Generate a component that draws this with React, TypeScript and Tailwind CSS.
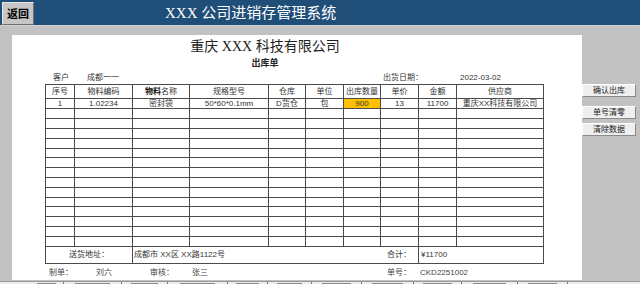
const cols = [29, 58, 57, 79, 37, 38, 37, 38, 38, 87];
const rowHeights = [10, 10, 10, 10, 10, 9, 10, 10, 10, 10, 9, 10, 10, 10, 10];

const firstRow = ["1", "1.02234", "密封袋", "50*60*0.1mm", "D货仓", "包", "900", "13", "11700", "重庆XX科技有限公司"];

const tabWidths = [34, 58, 46, 60, 40, 44, 50, 52, 48, 56, 50];

function SideButton({ label, className }: { label: string; className?: string }) {
  return (
    <button
      type="button"
      className={`w-[54px] h-[13px] bg-[#efefef] border-t border-l border-t-white border-l-white border-b border-r border-b-[#8a8a8a] border-r-[#8a8a8a] text-[8px] leading-[11px] text-[#222] ${className ?? ""}`}
    >
      {label}
    </button>
  );
}

export default function App() {
  return (
    <div className="w-[640px] h-[284px] overflow-hidden bg-[#c2c2c2] flex flex-col font-['Liberation_Sans','Noto_Sans_CJK_SC',sans-serif]">
      {/* top bar */}
      <header className="h-[26px] shrink-0 bg-[#1f4e79] flex items-start border-b border-[#d2d2d2]">
        <button
          type="button"
          className="mt-[2px] ml-[2px] w-[32px] h-[23px] bg-[#c6c6c6] border-t border-l border-t-[#e6e6e6] border-l-[#e6e6e6] border-b border-r border-b-[#6d6d6d] border-r-[#6d6d6d] text-[11px] font-bold text-black leading-[20px]"
        >
          返回
        </button>
        <h1 className="ml-[131px] mt-[3px] text-[15px] leading-[20px] text-white font-['Liberation_Serif','Noto_Sans_CJK_SC',serif]">
          XXX 公司进销存管理系统
        </h1>
      </header>

      <div className="flex flex-1 min-h-0">
        <div className="pl-[12px] pt-[9px]">
          <div className="w-[570px] h-[245px] bg-white flex flex-col text-[8px] text-[#333]">
            <div className="w-[506px] mt-[4px] text-center text-[14px] leading-[16px] text-[#222] font-['Liberation_Serif','Noto_Sans_CJK_SC',serif]">
              重庆 XXX 科技有限公司
            </div>
            <div className="w-[506px] mt-[3px] text-center text-[9px] leading-[11px] font-bold text-[#222]">
              出库单
            </div>

            <div className="flex mt-[3px] h-[12px] leading-[12px] pl-[41px]">
              <span className="w-[34px]">客户</span>
              <span className="w-[296px]">成都一一</span>
              <span className="w-[77px]">出货日期：</span>
              <span>2022-03-02</span>
            </div>

            <table className="ml-[33px] w-[498px] table-fixed border-collapse">
              <colgroup>
                {cols.map((w, i) => (
                  <col key={i} style={{ width: w }} />
                ))}
              </colgroup>
              <tbody>
                <tr className="h-[14px]">
                  {["序号", "物料编码", null, "规格型号", "仓库", "单位", "出库数量", "单价", "金额", "供应商"].map((h, i) => (
                    <td key={i} className="border border-[#4b4b4b] text-center p-0 leading-[12px]">
                      {h ?? (
                        <>
                          <b className="text-[#111]">物料</b>名称
                        </>
                      )}
                    </td>
                  ))}
                </tr>
                {rowHeights.map((h, r) => (
                  <tr key={r} style={{ height: h }}>
                    {cols.map((_, c) => (
                      <td
                        key={c}
                        className={`border border-[#4b4b4b] text-center p-0 leading-[8px] ${
                          r === 0 && c === 6 ? "bg-[#ffc000]" : ""
                        }`}
                      >
                        {r === 0 ? firstRow[c] : ""}
                      </td>
                    ))}
                  </tr>
                ))}
                <tr className="h-[17px]">
                  <td colSpan={2} className="border border-[#4b4b4b] text-center p-0">
                    送货地址：
                  </td>
                  <td colSpan={6} className="border border-[#4b4b4b] p-0">
                    <div className="flex justify-between pl-[1px] pr-[7px]">
                      <span>成都市 XX区 XX路1122号</span>
                      <span>合计：</span>
                    </div>
                  </td>
                  <td colSpan={2} className="border border-[#4b4b4b] p-0 pl-[2px]">
                    ¥11700
                  </td>
                </tr>
              </tbody>
            </table>

            <div className="flex mt-[3px] h-[12px] leading-[12px] pl-[37px] text-[#444]">
              <span className="w-[47px]">制单：</span>
              <span className="w-[54px]">刘六</span>
              <span className="w-[42px]">审核：</span>
              <span className="w-[195px]">张三</span>
              <span className="w-[33px]">单号：</span>
              <span>CKD2251002</span>
            </div>
          </div>
        </div>

        <div className="flex flex-col pt-[58px]">
          <SideButton label="确认出库" />
          <SideButton label="单号清零" className="mt-[9px]" />
          <SideButton label="清除数据" className="mt-[4px]" />
        </div>
      </div>

      {/* sheet tab strip, cut off by the window edge */}
      <div className="h-[3px] shrink-0 bg-[#ececec] border-t border-[#9a9a9a] flex pl-[30px]">
        {tabWidths.map((w, i) => (
          <div key={i} style={{ width: w }} className="h-full border-r border-[#777] flex justify-center gap-[3px] pt-[1px]">
            <div className="w-[60%] h-[1px] bg-[#8a8a8a]" />
          </div>
        ))}
      </div>
    </div>
  );
}
